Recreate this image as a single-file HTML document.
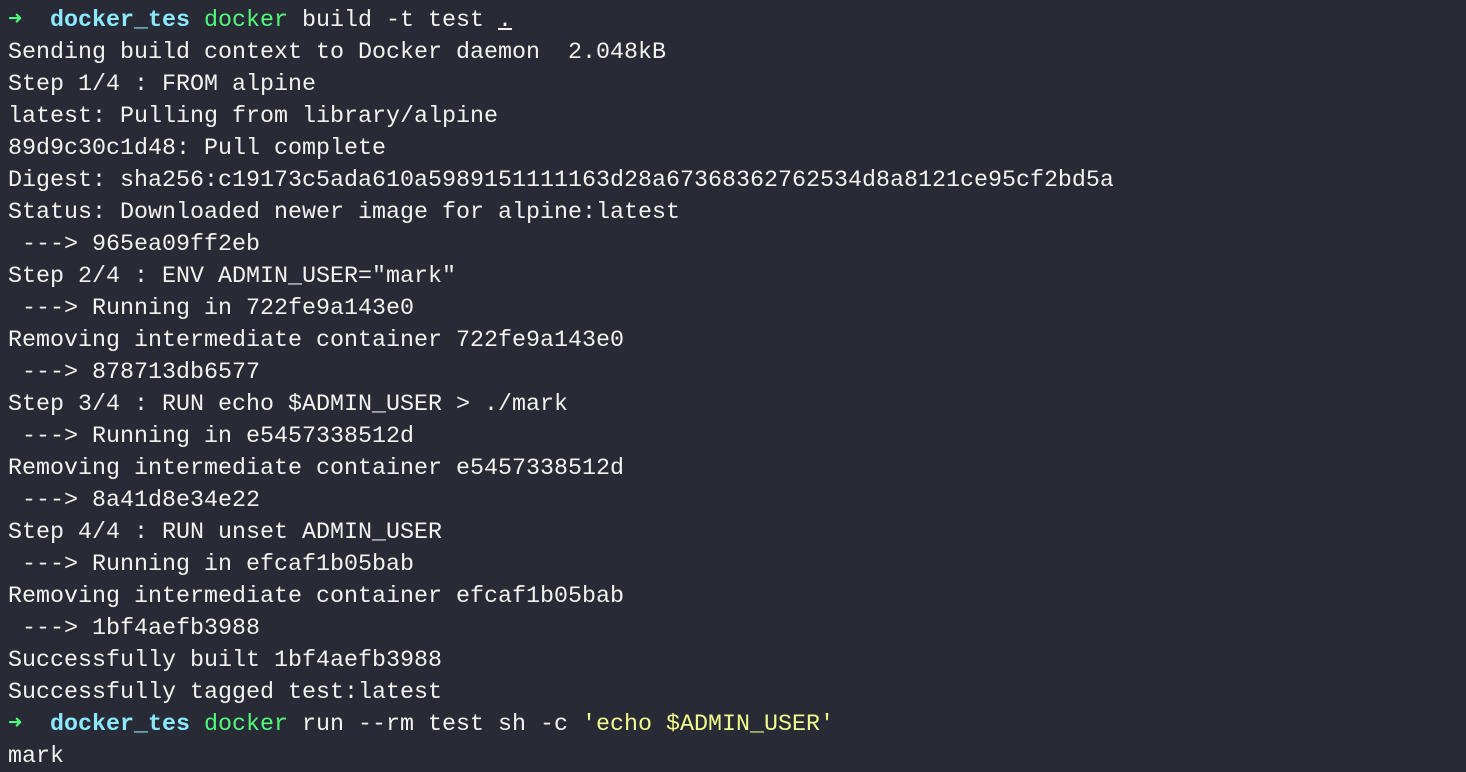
<!DOCTYPE html>
<html><head><meta charset="utf-8"><style>
html,body{margin:0;padding:0;background:#282a36;width:1466px;height:772px;overflow:hidden}
pre{margin:0;padding:5px 0 0 8px;font-family:"Liberation Mono","DejaVu Sans Mono",monospace;font-size:23.33px;line-height:32px;color:#f2f2ee;white-space:pre}
.g{color:#50fa7b}.c{color:#8be9fd;font-weight:bold}.y{color:#f1fa8c}.u{text-decoration:underline}
</style></head><body><pre><span class="g">➜</span>  <span class="c">docker_tes</span> <span class="g">docker</span> build -t test <span class="u">.</span>
Sending build context to Docker daemon  2.048kB
Step 1/4 : FROM alpine
latest: Pulling from library/alpine
89d9c30c1d48: Pull complete
Digest: sha256:c19173c5ada610a5989151111163d28a67368362762534d8a8121ce95cf2bd5a
Status: Downloaded newer image for alpine:latest
 ---&gt; 965ea09ff2eb
Step 2/4 : ENV ADMIN_USER="mark"
 ---&gt; Running in 722fe9a143e0
Removing intermediate container 722fe9a143e0
 ---&gt; 878713db6577
Step 3/4 : RUN echo $ADMIN_USER &gt; ./mark
 ---&gt; Running in e5457338512d
Removing intermediate container e5457338512d
 ---&gt; 8a41d8e34e22
Step 4/4 : RUN unset ADMIN_USER
 ---&gt; Running in efcaf1b05bab
Removing intermediate container efcaf1b05bab
 ---&gt; 1bf4aefb3988
Successfully built 1bf4aefb3988
Successfully tagged test:latest
<span class="g">➜</span>  <span class="c">docker_tes</span> <span class="g">docker</span> run --rm test sh -c <span class="y">'echo $ADMIN_USER'</span>
mark</pre></body></html>
